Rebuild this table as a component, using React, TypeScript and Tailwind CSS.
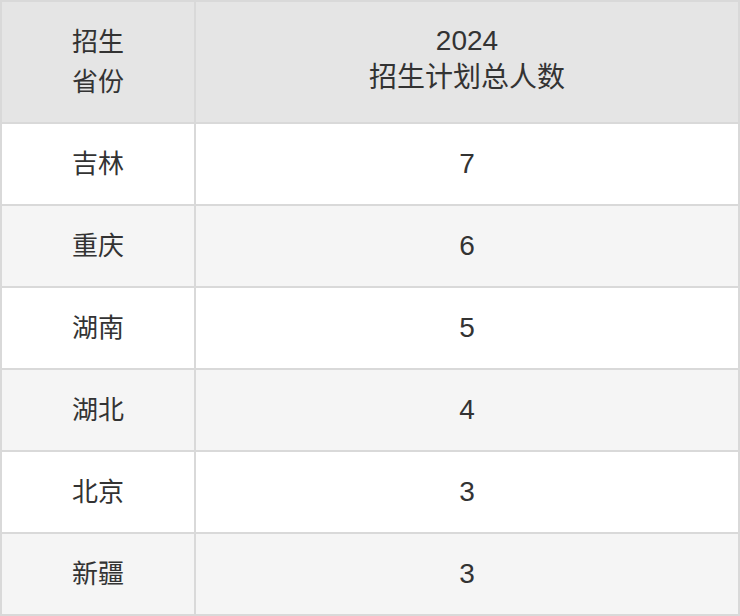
const rows = [
  { province: "吉林", count: 7 },
  { province: "重庆", count: 6 },
  { province: "湖南", count: 5 },
  { province: "湖北", count: 4 },
  { province: "北京", count: 3 },
  { province: "新疆", count: 3 },
];

export default function App() {
  return (
    <div className="w-[740px] h-[616px] bg-white text-[#333333] font-['Liberation_Sans','Noto_Sans_CJK_SC',sans-serif]">
      <div className="grid grid-cols-[192px_1fr] grid-rows-[120px_repeat(6,80px)] gap-[2px] p-[2px] bg-[#d9d9d9]">
        <div className="bg-[#e5e5e5] flex flex-col items-center justify-center text-[26px] leading-[40px]">
          <span>招生</span>
          <span>省份</span>
        </div>
        <div className="bg-[#e5e5e5] flex flex-col items-center justify-center text-[28px] leading-[37px] pb-[6px]">
          <span>2024</span>
          <span>招生计划总人数</span>
        </div>
        {rows.map((row, i) => (
          <Row key={i} {...row} striped={i % 2 === 1} />
        ))}
      </div>
    </div>
  );
}

const Row = ({ province, count, striped }: { province: string; count: number; striped: boolean }) => {
  const bg = striped ? "bg-[#f5f5f5]" : "bg-white";
  return (
    <>
      <div className={`${bg} flex items-center justify-center text-[26px]`}>{province}</div>
      <div className={`${bg} flex items-center justify-center text-[28px]`}>{count}</div>
    </>
  );
};
